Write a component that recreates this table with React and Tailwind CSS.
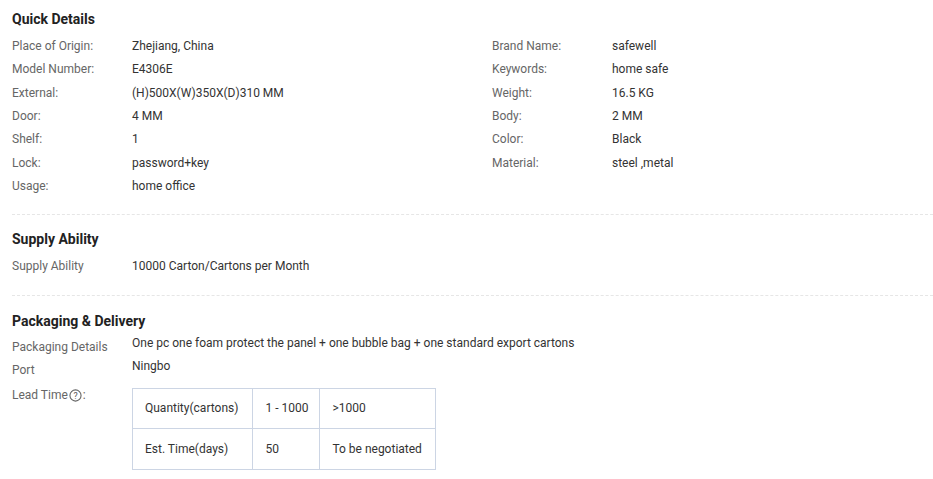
import React from "react";

const quickLeft = [
  ["Place of Origin:", "Zhejiang, China"],
  ["Model Number:", "E4306E"],
  ["External:", "(H)500X(W)350X(D)310 MM"],
  ["Door:", "4 MM"],
  ["Shelf:", "1"],
  ["Lock:", "password+key"],
  ["Usage:", "home office"],
];

const quickRight = [
  ["Brand Name:", "safewell"],
  ["Keywords:", "home safe"],
  ["Weight:", "16.5 KG"],
  ["Body:", "2 MM"],
  ["Color:", "Black"],
  ["Material:", "steel ,metal"],
];

const Row = ({ label, value }) => (
  <div className="flex h-[23.34px] items-center">
    <div className="w-[120px] shrink-0 text-[#666]">{label}</div>
    <div className="text-[#333]">{value}</div>
  </div>
);

// label sits a few px lower than its value in the packaging block
const LowRow = ({ label, value }) => (
  <div className="flex h-[23.34px] items-start">
    <div className="w-[120px] shrink-0 leading-[31.34px] text-[#666]">{label}</div>
    <div className="text-[#333]">{value}</div>
  </div>
);

const Heading = ({ children }) => (
  <h3 className="h-5 text-[14px] font-bold leading-5 text-[#222]">{children}</h3>
);

const Divider = () => <div className="border-t border-dashed border-[#e6e6e6]" />;

const App = () => {
  return (
    <div
      className="min-h-[479px] bg-white text-[12px] leading-[23.34px]"
      style={{ fontFamily: "Roboto, 'Liberation Sans', sans-serif" }}
    >
      <div className="pl-3">
        {/* Quick Details */}
        <div className="pt-[9px] pb-[16px]">
          <Heading>Quick Details</Heading>
          <div className="mt-[6px] grid grid-cols-[480px_1fr]">
            <div>
              {quickLeft.map(([l, v]) => (
                <Row key={l} label={l} value={v} />
              ))}
            </div>
            <div>
              {quickRight.map(([l, v]) => (
                <Row key={l} label={l} value={v} />
              ))}
            </div>
          </div>
        </div>
        <Divider />

        {/* Supply Ability */}
        <div className="pt-[14px] pb-[16px]">
          <Heading>Supply Ability</Heading>
          <div className="mt-[6px]">
            <Row label="Supply Ability" value="10000 Carton/Cartons per Month" />
          </div>
        </div>
        <Divider />

        {/* Packaging & Delivery */}
        <div className="pt-[15px]">
          <Heading>Packaging &amp; Delivery</Heading>
          <div className="mt-[1px]">
            <LowRow
              label="Packaging Details"
              value="One pc one foam protect the panel + one bubble bag + one standard export cartons"
            />
            <LowRow label="Port" value="Ningbo" />
          </div>
          <div className="flex items-start">
            <div className="mt-[6px] flex h-[23.34px] w-[120px] shrink-0 items-center text-[#666]">
              Lead Time
              <svg width="13" height="13" viewBox="0 0 14 14" className="mx-[1px]">
                <circle cx="7" cy="7" r="6" fill="none" stroke="#666" strokeWidth="1.2" />
                <text x="7" y="10.4" textAnchor="middle" fontSize="9.5" fill="#555" fontFamily="Roboto, sans-serif">?</text>
              </svg>
              :
            </div>
            <table className="mt-[10px] border-collapse text-[#333]">
              <tbody>
                <tr className="h-[40px]">
                  <td className="border border-[#ccd5e4] pl-3 pr-[14px]">Quantity(cartons)</td>
                  <td className="border border-[#ccd5e4] pl-[12px] pr-[11px]">1 - 1000</td>
                  <td className="w-[116px] border border-[#ccd5e4] pl-[12px]">&gt;1000</td>
                </tr>
                <tr className="h-[41px]">
                  <td className="border border-[#ccd5e4] pl-3">Est. Time(days)</td>
                  <td className="border border-[#ccd5e4] pl-[12px]">50</td>
                  <td className="border border-[#ccd5e4] pl-[12px]">To be negotiated</td>
                </tr>
              </tbody>
            </table>
          </div>
        </div>
      </div>
    </div>
  );
};

export default App;
